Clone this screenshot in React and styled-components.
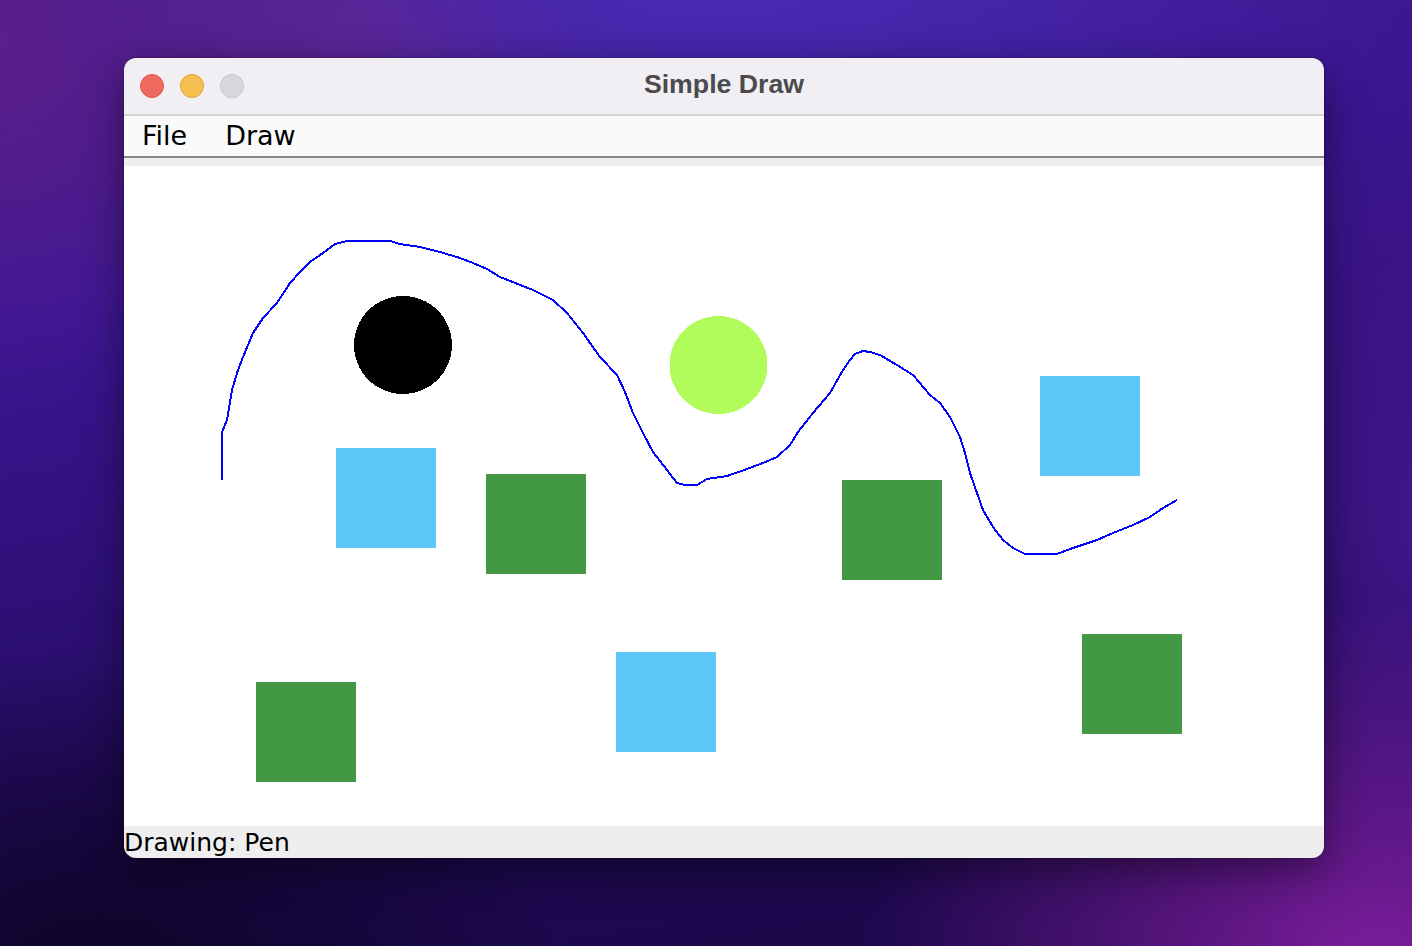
import React from "react";
import styled, { createGlobalStyle } from "styled-components";

const Global = createGlobalStyle`
  html, body { margin: 0; padding: 0; }
  body {
    width: 1412px;
    height: 946px;
    overflow: hidden;
    font-family: "DejaVu Sans", "Noto Sans", sans-serif;
  }
`;

const Desktop = styled.div`
  box-sizing: border-box;
  width: 1412px;
  height: 946px;
  padding: 58px 0 0 124px;
  background:
    radial-gradient(ellipse 520px 360px at 1380px 960px, rgba(128, 30, 160, 0.95) 0%, rgba(128, 30, 160, 0) 100%),
    radial-gradient(ellipse 260px 520px at 1420px 520px, rgba(66, 22, 140, 0.95) 0%, rgba(66, 22, 140, 0) 100%),
    radial-gradient(ellipse 700px 260px at 720px -20px, rgba(72, 44, 186, 0.95) 0%, rgba(72, 44, 186, 0) 100%),
    radial-gradient(ellipse 260px 200px at 360px 20px, rgba(112, 34, 120, 0.8) 0%, rgba(112, 34, 120, 0) 100%),
    radial-gradient(ellipse 320px 360px at 0px 40px, rgba(92, 30, 140, 0.95) 0%, rgba(92, 30, 140, 0) 100%),
    radial-gradient(ellipse 460px 320px at 100px 980px, rgba(14, 4, 40, 1) 0%, rgba(14, 4, 40, 0) 100%),
    linear-gradient(170deg, #4a1c86 0%, #3b1694 26%, #2f1078 50%, #1d0950 76%, #1c0848 100%);
`;

const Window = styled.div`
  width: 1200px;
  height: 800px;
  border-radius: 12px;
  overflow: hidden;
  display: flex;
  flex-direction: column;
  box-shadow: 0 12px 40px rgba(0, 0, 0, 0.45), 0 0 0 1px rgba(0, 0, 0, 0.15);
`;

const TitleBar = styled.div`
  height: 56px;
  flex: none;
  background: #f1eff4;
  border-bottom: 2px solid #d4d3d6;
  display: grid;
  grid-template-columns: 1fr auto 1fr;
  align-items: center;
`;

const Lights = styled.div`
  display: flex;
  gap: 16px;
  padding-left: 16px;
`;

const Light = styled.span`
  width: 24px;
  height: 24px;
  box-sizing: border-box;
  border-radius: 50%;
  background: ${(p) => p.$fill};
  border: 1px solid ${(p) => p.$ring};
`;

const Title = styled.div`
  font-family: "Liberation Sans", Arial, sans-serif;
  font-weight: 700;
  font-size: 26.7px;
  color: #4b4a4d;
  margin-top: -3px;
`;

const MenuBar = styled.div`
  height: 40px;
  flex: none;
  background: #fafafa;
  border-bottom: 2px solid #878787;
  display: flex;
  align-items: center;
  gap: 38px;
  padding-left: 18px;
`;

const MenuItem = styled.span`
  font-family: "DejaVu Sans", sans-serif;
  font-size: 27px;
  color: #000;
  line-height: 40px;
`;

const Gap = styled.div`
  height: 8px;
  flex: none;
  background: #eeeeee;
`;

const Canvas = styled.div`
  height: 660px;
  flex: none;
  background: #ffffff;
  svg { display: block; }
`;

const StatusBar = styled.div`
  height: 32px;
  flex: none;
  background: #eeeeee;
  display: flex;
  align-items: flex-end;
`;

const StatusText = styled.span`
  font-family: "DejaVu Sans", sans-serif;
  font-size: 25px;
  color: #000;
  line-height: 32px;
  transform: translateY(1px);
`;

const penPoints = [
  [222, 480], [222, 432], [227, 420], [232, 390], [237, 373], [243, 357],
  [253, 333], [263, 318], [277, 303], [290, 283], [300, 272], [310, 262],
  [323, 253], [335, 244], [347, 241], [390, 241], [400, 244], [420, 247],
  [440, 252], [460, 258], [473, 263], [487, 269], [500, 277], [533, 290],
  [553, 300], [567, 313], [583, 333], [600, 357], [617, 375], [625, 392],
  [633, 413], [643, 433], [653, 452], [667, 470], [677, 483], [685, 485],
  [697, 485], [707, 479], [727, 476], [747, 469], [763, 463], [777, 457],
  [790, 445], [798, 432], [813, 413], [830, 393], [843, 370], [850, 360],
  [855, 354], [863, 351], [870, 352], [880, 355], [897, 365], [913, 375],
  [930, 395], [940, 403], [950, 417], [960, 437], [965, 453], [970, 473],
  [977, 493], [983, 510], [993, 527], [1003, 540], [1013, 548], [1025, 554],
  [1057, 554], [1073, 548], [1097, 540], [1113, 533], [1133, 525],
  [1150, 517], [1163, 508], [1177, 500],
];

const rects = [
  { x: 336, y: 448, c: "#5ec8fa" },
  { x: 1040, y: 376, c: "#5ec8fa" },
  { x: 616, y: 652, c: "#5ec8fa" },
  { x: 486, y: 474, c: "#439843" },
  { x: 842, y: 480, c: "#439843" },
  { x: 256, y: 682, c: "#439843" },
  { x: 1082, y: 634, c: "#439843" },
];

function Drawing() {
  return (
    <svg width="1200" height="660" viewBox="124 166 1200 660" shapeRendering="crispEdges">
      <circle cx="403" cy="345" r="49" fill="#000000" />
      <circle cx="718.5" cy="365" r="49" fill="#b1fc5b" />
      {rects.map((r, i) => (
        <rect key={i} x={r.x} y={r.y} width="100" height="100" fill={r.c} />
      ))}
      <polyline
        points={penPoints.map((p) => p.join(",")).join(" ")}
        fill="none"
        stroke="#0000ff"
        strokeWidth="2"
        strokeLinejoin="round"
      />
    </svg>
  );
}

export default function App() {
  return (
    <>
      <Global />
      <Desktop>
        <Window>
          <TitleBar>
            <Lights>
              <Light $fill="#ee6a5f" $ring="#d65a50" />
              <Light $fill="#f5c04f" $ring="#d9a43c" />
              <Light $fill="#d9d7dc" $ring="#c3c1c6" />
            </Lights>
            <Title>Simple Draw</Title>
            <div />
          </TitleBar>
          <MenuBar>
            <MenuItem>File</MenuItem>
            <MenuItem>Draw</MenuItem>
          </MenuBar>
          <Gap />
          <Canvas>
            <Drawing />
          </Canvas>
          <StatusBar>
            <StatusText>Drawing: Pen</StatusText>
          </StatusBar>
        </Window>
      </Desktop>
    </>
  );
}
